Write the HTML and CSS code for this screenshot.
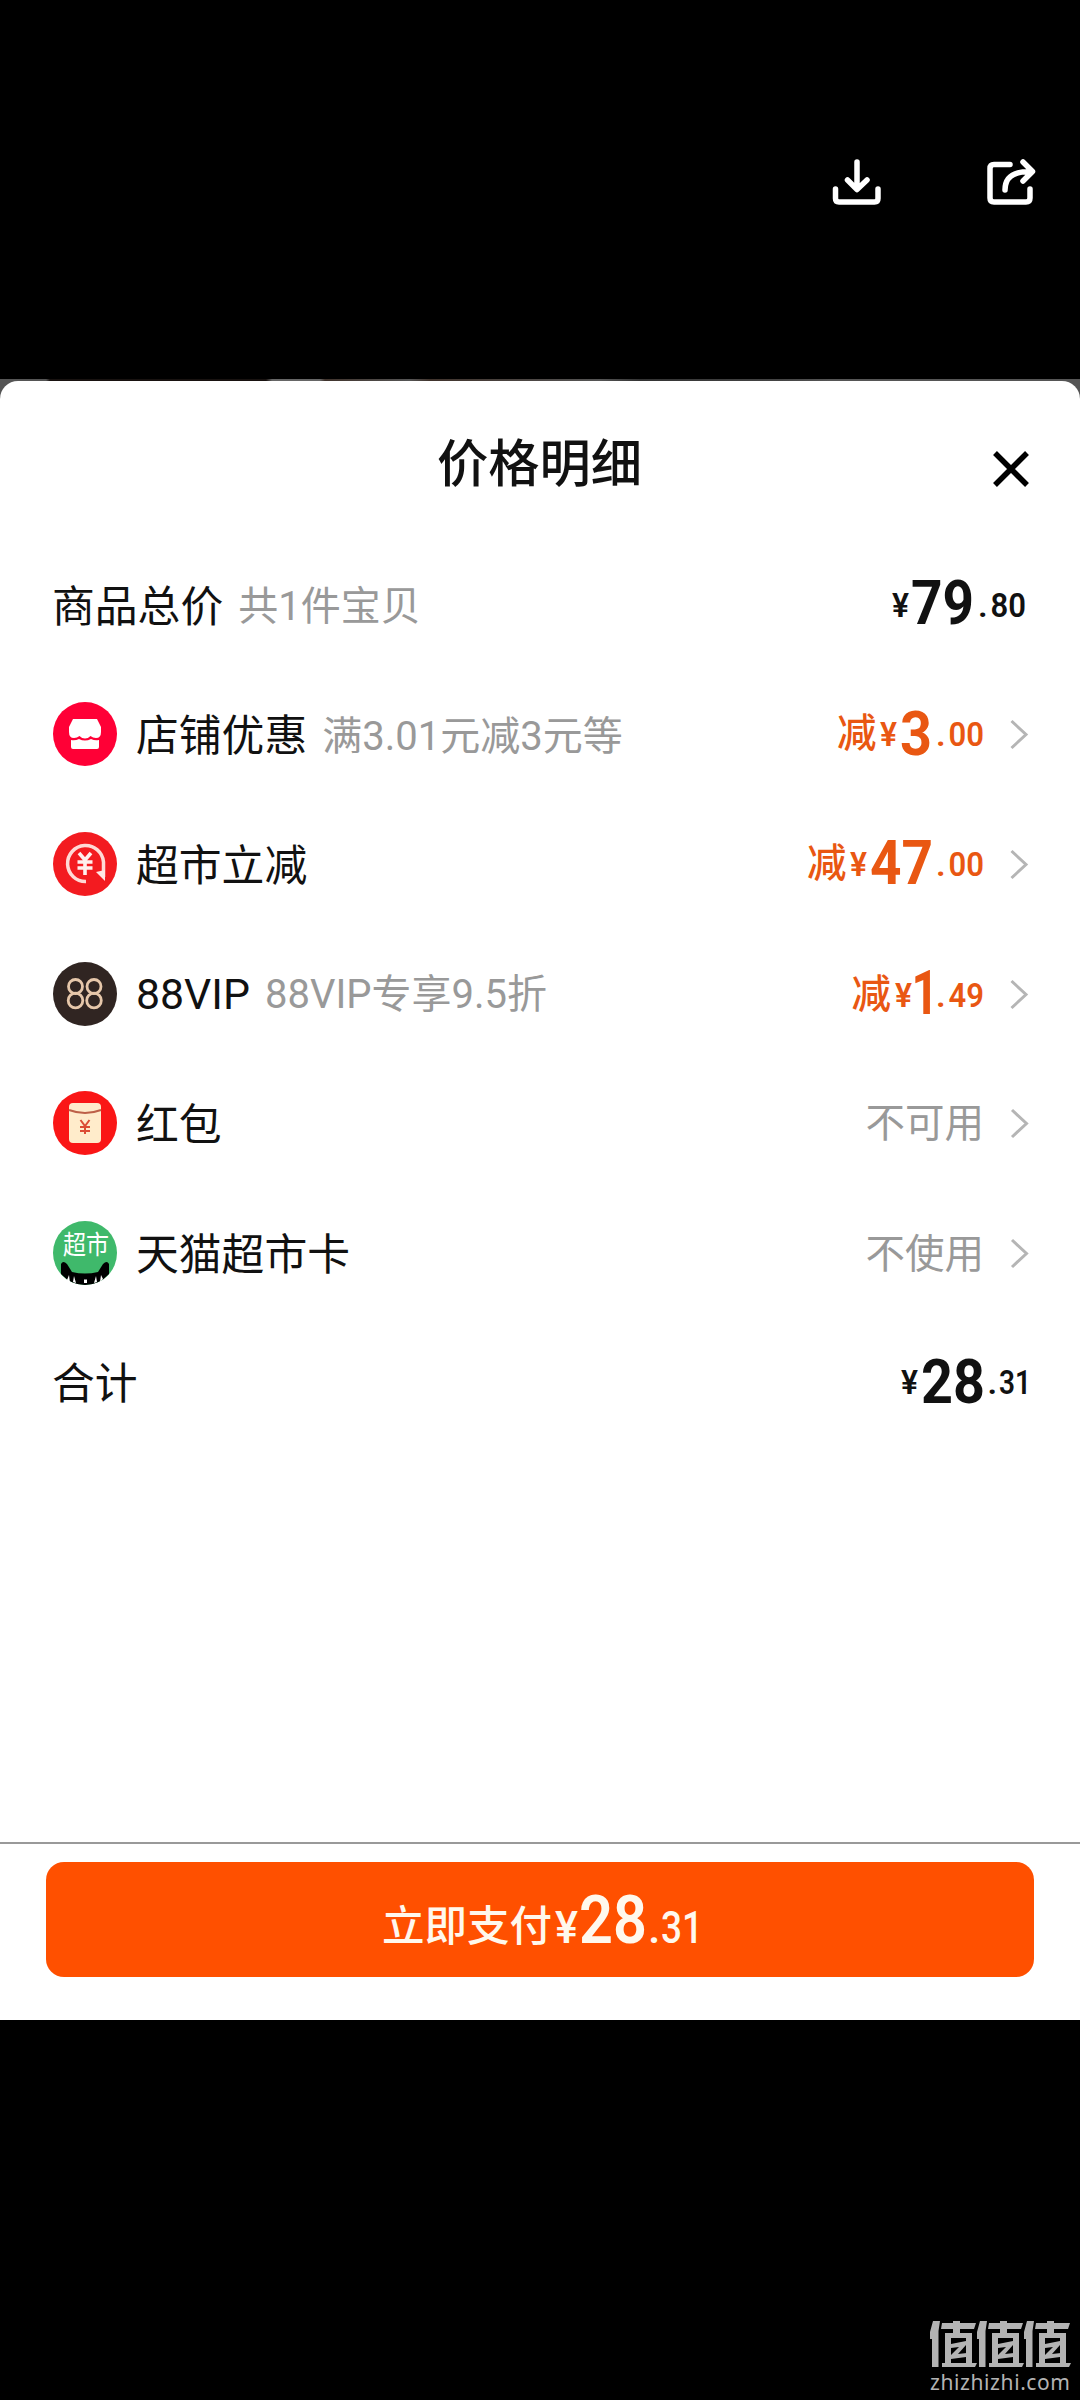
FILE: index.html
```html
<!DOCTYPE html>
<html lang="zh-CN">
<head>
<meta charset="utf-8">
<title>价格明细</title>
<link rel="stylesheet" href="styles.css">
</head>
<body>
<header class="toolbar">
  <svg class="tool" width="52" height="52" viewBox="0 0 52 52"><path d="M26 6V33M16.500 24L26 33.500L36 24M4.500 33V42.500Q4.500 46 8 46H43.500Q47 46 47 42.500V33"/></svg>
  <svg class="tool" width="52" height="52" viewBox="0 0 52 52"><path d="M26 8.500H10Q6 8.500 6 12.500V42Q6 46 10 46H42Q46 46 46 42V33M21 34C21 22 28 15.500 46 15.500M39 6L48.500 15.500L39 25"/></svg>
</header>
<div class="backdrop">
<main class="sheet">
  <div class="title-bar">
    <h1>价格明细</h1>
    <svg class="close" width="36" height="36" viewBox="0 0 36 36"><path d="M2 2L34 34M34 2L2 34"/></svg>
  </div>
  <section class="rows">
    <div class="row">
      <span class="label">商品总价</span><span class="note">共1件宝贝</span>
      <svg class="amount total" viewBox="780 0 250 80"><text class="minor" x="892" y="52" textLength="17" lengthAdjust="spacingAndGlyphs">¥</text><text class="major" x="911" y="59" textLength="63" lengthAdjust="spacingAndGlyphs">79</text><text class="minor" x="978" y="52">.</text><text class="minor" x="990.500" y="52" textLength="35.500" lengthAdjust="spacingAndGlyphs">80</text></svg>
    </div>
    <div class="row">
      <svg class="badge" viewBox="0 0 64 64"><circle cx="32" cy="32" r="32" fill="#ff0036"/><path d="M20 17H44L48 25V30Q48 36 43 36Q40 36 37.500 34Q35 36.500 32 36.500Q29 36.500 26.500 34Q24 36 21 36Q16 36 16 30V25Z" fill="#fff"/><path d="M18 38Q22 39 26 37Q32 40 38 37Q42 39 46 38V45Q46 47 44 47H20Q18 47 18 45Z" fill="#fff"/></svg>
      <span class="label">店铺优惠</span><span class="note">满3.01元减3元等</span>
      <svg class="amount off" viewBox="780 0 250 80"><text class="off-word" x="837" y="53">减</text><text class="minor" x="880" y="52" textLength="17" lengthAdjust="spacingAndGlyphs">¥</text><text class="major" x="900" y="61" textLength="32" lengthAdjust="spacingAndGlyphs">3</text><text class="minor" x="936" y="52">.</text><text class="minor" x="948.500" y="52" textLength="35.500" lengthAdjust="spacingAndGlyphs">00</text><path class="chevron" d="M1011.500 27L1026 40.500L1011.500 54"/></svg>
    </div>
    <div class="row">
      <svg class="badge" viewBox="0 0 64 64"><circle cx="32" cy="32" r="32" fill="#f31b20"/><g fill="none" stroke="#ffd9d5" stroke-width="3.500"><path d="M33 49.500A18 18 0 1 1 50.500 30V45"/><path d="M26 21L32 28L38 21M32 28V43M24.500 30H39.500M24.500 36H39.500" stroke-width="3.600" stroke="#fff0ee"/></g><path d="M43 40L52 38V49Z" fill="#ffe8e5"/></svg>
      <span class="label">超市立减</span>
      <svg class="amount off" viewBox="780 0 250 80"><text class="off-word" x="807" y="53">减</text><text class="minor" x="850" y="52" textLength="17" lengthAdjust="spacingAndGlyphs">¥</text><text class="major" x="870" y="60" textLength="63" lengthAdjust="spacingAndGlyphs">47</text><text class="minor" x="936" y="52">.</text><text class="minor" x="948.500" y="52" textLength="35.500" lengthAdjust="spacingAndGlyphs">00</text><path class="chevron" d="M1011.500 27L1026 40.500L1011.500 54"/></svg>
    </div>
    <div class="row">
      <svg class="badge" viewBox="0 0 64 64"><circle cx="32" cy="32" r="32" fill="#302522"/><g fill="none" stroke="#e6c7aa" stroke-width="2.800"><circle cx="22.500" cy="24.500" r="7"/><circle cx="22.500" cy="38.500" r="7.300"/><circle cx="41" cy="24.500" r="7"/><circle cx="41" cy="38.500" r="7.300"/></g></svg>
      <span class="label latin">88VIP</span><span class="note vip">88VIP专享9.5折</span>
      <svg class="amount off" viewBox="780 0 250 80"><text class="off-word" x="851.500" y="54">减</text><text class="minor" x="895" y="53" textLength="17" lengthAdjust="spacingAndGlyphs">¥</text><text class="major" x="911.500" y="60" textLength="27" lengthAdjust="spacingAndGlyphs">1</text><text class="minor" x="936" y="53">.</text><text class="minor" x="948.500" y="53" textLength="35.500" lengthAdjust="spacingAndGlyphs">49</text><path class="chevron" d="M1011.500 27L1026 40.500L1011.500 54"/></svg>
    </div>
    <div class="row">
      <svg class="badge" viewBox="0 0 64 64"><circle cx="32" cy="32" r="32" fill="#fa1616"/><rect x="16" y="12" width="32" height="40" rx="4" fill="#ffeccb"/><path d="M16 19Q32 25 48 19" fill="none" stroke="#bd6048" stroke-width="2"/><path d="M27.500 29L32 35L36.500 29M32 35V43M27 36H37M27 40H37" fill="none" stroke="#dc4d35" stroke-width="2"/></svg>
      <span class="label">红包</span>
      <span class="status">不可用</span><svg class="arrow" viewBox="0 0 18 30"><path class="chevron" d="M2 2L16.500 15.500L2 29"/></svg>
    </div>
    <div class="row">
      <svg class="badge" viewBox="0 0 64 64"><circle cx="32" cy="32" r="32" fill="#3fb96b"/><text class="market" x="10" y="33" textLength="46" lengthAdjust="spacingAndGlyphs">超市</text><path d="M8 53V43Q10 39 14 43L19 51Q32 54 45 51L50 43Q54 39 56 43V53Q46 64 32 64Q18 64 8 53Z"/><path d="M14 59L16 54L17 62ZM20 61L21 55L23 62ZM41 62L43 55L44 61ZM47 61L48 54L50 58ZM31 58.500H34V62H31Z" fill="#fff"/></svg>
      <span class="label">天猫超市卡</span>
      <span class="status lower">不使用</span><svg class="arrow" viewBox="0 0 18 30"><path class="chevron" d="M2 2L16.500 15.500L2 29"/></svg>
    </div>
    <div class="row">
      <span class="label">合计</span>
      <svg class="amount total" viewBox="780 0 250 80"><text class="minor" x="901" y="52" textLength="17" lengthAdjust="spacingAndGlyphs">¥</text><text class="major" x="921" y="61" textLength="64" lengthAdjust="spacingAndGlyphs">28</text><text class="minor" x="987.500" y="52">.</text><text class="minor" x="999" y="52" textLength="32" lengthAdjust="spacingAndGlyphs">31</text></svg>
    </div>
  </section>
  <footer class="pay-bar">
    <button class="pay"><svg width="380" height="100" viewBox="350 -10 380 100"><text class="pay-word" x="382" y="61">立即支付</text><text class="pay-minor" x="555" y="63" textLength="23" lengthAdjust="spacingAndGlyphs">¥</text><text class="pay-major" x="579" y="62.500" textLength="68" lengthAdjust="spacingAndGlyphs">28</text><text class="pay-minor" x="648" y="63">.</text><text class="pay-minor" x="661" y="63" textLength="42" lengthAdjust="spacingAndGlyphs">31</text></svg></button>
  </footer>
</main>
</div>
<footer class="brand">
  <svg width="142" height="76" viewBox="0 0 142 76"><defs><g id="zhi"><path d="M3 0H10L8.500 10V46H2V18H0V11ZM12 2H23V0H30V2H46L44 8H30V12H42V42H47L45 46H12V42H15V12H23V8H11ZM21 17V42H36V17Z" fill-rule="evenodd"/><path d="M21 23L36 20V24L28 33L37 32L36 36L21 38V34L29 26L21 27Z"/></g></defs><use href="#zhi"/><use href="#zhi" x="47"/><use href="#zhi" x="94"/><text class="domain" x="0" y="69" textLength="140">zhizhizhi.com</text></svg>
</footer>
</body>
</html>
```
FILE: styles.css
```css
* { box-sizing: border-box; }
body {
  margin: 0;
  width: 1080px;
  height: 2400px;
  display: flex;
  flex-direction: column;
  background: #000;
  color: #111;
  font-family: Roboto, "Noto Sans CJK SC", sans-serif;
}
svg { display: block; flex: none; overflow: visible; }
.toolbar {
  height: 379px;
  padding: 156px 44px 0 831px;
  display: flex;
  justify-content: space-between;
}
.tool path {
  fill: none;
  stroke: #fff;
  stroke-width: 5.5;
  stroke-linecap: round;
  stroke-linejoin: round;
}
.backdrop {
  height: 1641px;
  padding-top: 2px;
  background: linear-gradient(90deg, #555 46px, #181210 50px, #181210 266px, #666 272px, #666 320px, #40332c 325px, #555 410px, #40332c 430px, #555 600px, #333 640px, #444 780px, #555 830px);
}
.sheet {
  height: 1639px;
  display: flex;
  flex-direction: column;
  background: #fff;
  border-radius: 18px 18px 0 0;
}
.title-bar {
  height: 159px;
  padding: 0 51px 0 0;
  display: grid;
  grid-template-columns: 1fr 36px;
  align-items: center;
}
h1 {
  margin: 8px 0 0;
  padding-left: 86px;
  text-align: center;
  font-size: 51.3px;
  line-height: 74px;
  font-weight: 500;
}
.close { margin-top: 17px; }
.close path { stroke: #000; stroke-width: 5.5; }
.rows { flex: 1; }
.row {
  height: 129.6px;
  padding: 0 50px 0 52px;
  display: flex;
  align-items: center;
  white-space: nowrap;
}
.badge { width: 64px; height: 64px; margin: 0 19px 0 1px; }
.label { padding-top: 4px; font-size: 42.8px; line-height: 60px; }
.latin { padding-top: 0; }
.note { padding-top: 5px; margin-left: 15px; font-size: 40px; line-height: 56px; color: #999; }
.vip { padding-top: 2px; }
.amount { width: 250px; height: 80px; margin-left: auto; }
.total { fill: #111; }
.off { fill: #e95712; }
.major { font-size: 62px; font-weight: 700; }
.minor { font-size: 34px; font-weight: 600; }
.off-word { font-size: 39.5px; font-weight: 500; }
.chevron { fill: none; stroke: #b5b5b5; stroke-width: 3; }
.status { margin: 0 26px 0 auto; padding-top: 1px; font-size: 39.5px; line-height: 56px; color: #999; }
.lower { padding-top: 5px; }
.arrow { width: 18px; height: 30px; margin-right: 2px; }
.market { font-size: 26px; fill: #fff; }
.pay-bar {
  height: 178px;
  padding: 18px 46px 0;
  border-top: 2px solid #999;
}
.pay {
  width: 988px;
  height: 115px;
  padding: 0;
  display: flex;
  align-items: center;
  justify-content: center;
  border: 0;
  border-radius: 18px;
  background: #ff5000;
  font-family: inherit;
}
.pay svg { fill: #fff8ed; }
.pay-word { font-size: 42.5px; font-weight: 500; }
.pay-major { font-size: 66px; font-weight: 600; }
.pay-minor { font-size: 45px; font-weight: 500; }
.brand { flex: 1; display: flex; align-items: flex-end; justify-content: flex-end; padding: 0 8px 3px 0; }
.brand svg { fill: #b3b3b3; }
.domain { font-family: "Noto Sans", sans-serif; font-size: 21px; }
```
